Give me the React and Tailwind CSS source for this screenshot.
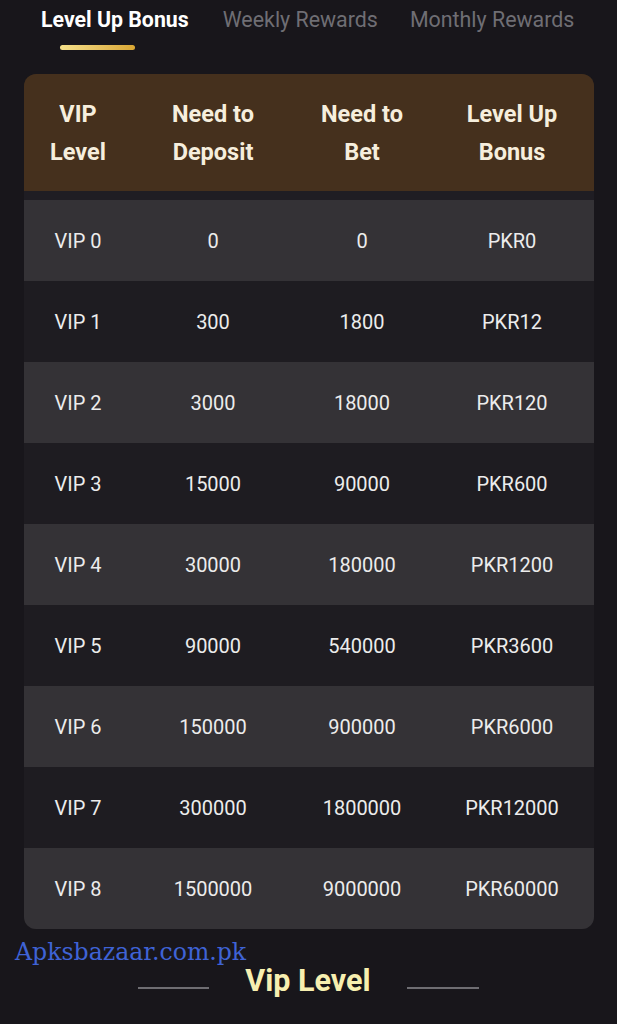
import React from "react";

const rows = [
  ["VIP 0", "0", "0", "PKR0"],
  ["VIP 1", "300", "1800", "PKR12"],
  ["VIP 2", "3000", "18000", "PKR120"],
  ["VIP 3", "15000", "90000", "PKR600"],
  ["VIP 4", "30000", "180000", "PKR1200"],
  ["VIP 5", "90000", "540000", "PKR3600"],
  ["VIP 6", "150000", "900000", "PKR6000"],
  ["VIP 7", "300000", "1800000", "PKR12000"],
  ["VIP 8", "1500000", "9000000", "PKR60000"],
];

export default function App() {
  return (
    <div className="w-[617px] h-[1024px] bg-[#18161b] overflow-hidden" style={{ fontFamily: "Roboto, 'Noto Sans', sans-serif" }}>
      {/* Tabs */}
      <div className="flex h-[74px] pt-[5px]">
        <div className="ml-[41px] flex flex-col">
          <div className="text-[21.3px] leading-[30px] font-bold text-white">Level Up Bonus</div>
          <div className="mt-[10px] ml-[19px] w-[75px] h-[5px] rounded-full bg-gradient-to-r from-[#f4e08a] to-[#d9a632]" />
        </div>
        <div className="ml-[34px] text-[21.4px] leading-[30px] text-[#6f6e74]">Weekly Rewards</div>
        <div className="ml-[32px] text-[21.4px] leading-[30px] text-[#6f6e74]">Monthly Rewards</div>
      </div>

      {/* Table */}
      <div className="mx-[24px] w-[570px] rounded-[12px] overflow-hidden bg-[#1e1c21]">
        <div className="grid grid-cols-[108px_162px_136px_164px] h-[117px] bg-[#45301d] items-center text-[23.5px] leading-[38px] font-bold text-[#f6eedd] text-center">
          <div>VIP<br />Level</div>
          <div>Need to<br />Deposit</div>
          <div>Need to<br />Bet</div>
          <div>Level Up<br />Bonus</div>
        </div>
        <div className="h-[9px] bg-[#1f1d23]" />
        {rows.map((r, i) => (
          <div
            key={i}
            className={`grid grid-cols-[108px_162px_136px_164px] h-[81px] items-center text-center text-[20px] text-[#ececec] ${i % 2 === 0 ? "bg-[#343236]" : "bg-[#1e1c21]"}`}
          >
            {r.map((c, j) => (
              <div key={j}>{c}</div>
            ))}
          </div>
        ))}
      </div>

      {/* Footer */}
      <div className="relative h-[97px]">
        <div className="absolute left-[15px] top-[6px] text-[23.6px] leading-[34px] text-[#3f63d6]" style={{ fontFamily: "'DejaVu Serif', 'Liberation Serif', serif" }}>
          Apksbazaar.com.pk
        </div>
        <div className="flex items-center justify-center pt-[33px] gap-[36px]">
          <div className="w-[71px] h-[2px] bg-[#6e6d72] mt-[14px]" />
          <div className="text-[30.5px] leading-[38px] font-bold text-[#f7efb0]">Vip Level</div>
          <div className="w-[72px] h-[2px] bg-[#6e6d72] mt-[14px]" />
        </div>
      </div>
    </div>
  );
}
